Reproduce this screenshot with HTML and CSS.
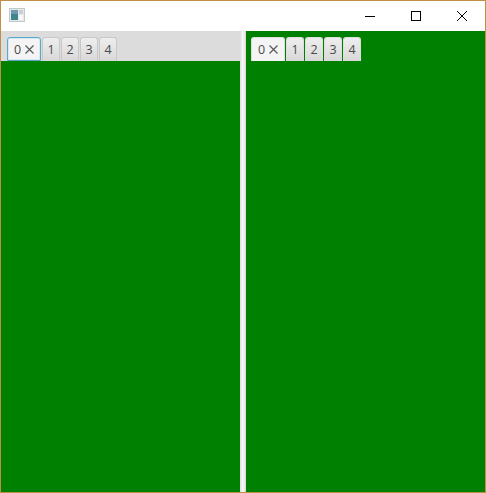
FILE: index.html
```html
<!DOCTYPE html>
<html lang="en">
<head>
    <meta charset="UTF-8">
    <title>Tabs</title>
    <link rel="stylesheet" href="styles.css">
</head>
<body>
    <div class="window">
        <div class="titlebar">
            <svg class="app-icon" width="16" height="14" viewBox="0 0 16 14">
                <rect x="0.5" y="0.5" width="15" height="13" fill="#e6e9ea" stroke="#c2c7ca"/>
                <rect x="2" y="2" width="7" height="10" fill="#3f8590"/>
                <rect x="2" y="2" width="7" height="4" fill="#6d98b0"/>
                <rect x="10" y="2" width="4" height="4" fill="#c6d0d6"/>
                <rect x="10" y="7" width="4" height="5" fill="#f8f8f8"/>
            </svg>
            <div class="win-buttons">
                <svg class="win-btn" width="46" height="30" viewBox="0 0 46 30">
                    <path d="M18 15.5h10" stroke="#000" fill="none"/>
                </svg>
                <svg class="win-btn" width="46" height="30" viewBox="0 0 46 30">
                    <rect x="18.5" y="10.5" width="9" height="9" stroke="#000" fill="none"/>
                </svg>
                <svg class="win-btn" width="46" height="30" viewBox="0 0 46 30">
                    <path d="M18 10l10 10M28 10l-10 10" stroke="#000" fill="none"/>
                </svg>
            </div>
        </div>
        <div class="split">
            <div class="pane">
                <div class="tab-header grey">
                    <div class="tab selected focused">
                        <span>0</span>
                        <svg class="close" width="9" height="9" viewBox="0 0 9 9"><path d="M0.5 0.5l8 8M8.5 0.5l-8 8"/></svg>
                    </div>
                    <div class="tab">1</div>
                    <div class="tab">2</div>
                    <div class="tab">3</div>
                    <div class="tab">4</div>
                </div>
            </div>
            <div class="divider"></div>
            <div class="pane">
                <div class="tab-header clear">
                    <div class="tab selected">
                        <span>0</span>
                        <svg class="close" width="9" height="9" viewBox="0 0 9 9"><path d="M0.5 0.5l8 8M8.5 0.5l-8 8"/></svg>
                    </div>
                    <div class="tab">1</div>
                    <div class="tab">2</div>
                    <div class="tab">3</div>
                    <div class="tab">4</div>
                </div>
            </div>
        </div>
    </div>
</body>
</html>
```

FILE: styles.css
```css
* {
    margin: 0;
    padding: 0;
    box-sizing: border-box;
}

html, body {
    height: 100%;
}

body {
    font-family: "Open Sans", "Noto Sans", sans-serif;
    overflow: hidden;
}

.window {
    height: 100%;
    display: flex;
    flex-direction: column;
    border: 1px solid #bf8f45;
    background: #fff;
}

.titlebar {
    height: 30px;
    flex: none;
    display: flex;
    align-items: center;
    justify-content: space-between;
    padding-left: 8px;
    background: #fff;
}

.app-icon {
    display: block;
    margin-bottom: 2px;
}

.win-btn,
.close {
    display: block;
}

.win-buttons {
    display: flex;
}

.split {
    flex: 1;
    display: flex;
    min-height: 0;
}

.pane {
    flex: 1;
    background: #008000;
}

.divider {
    width: 6px;
    flex: none;
    background: linear-gradient(to right, #dcdcdc, #f8f8f8 45%, #e6e6e6 85%, #cfcfcf);
}

.tab-header {
    height: 30px;
    display: flex;
    gap: 1px;
    align-items: flex-end;
    padding-left: 6px;
}

.tab-header.grey {
    background: #dcdcdc;
}

.tab-header.clear {
    padding-left: 5px;
}

.tab {
    width: 18px;
    height: 24px;
    display: flex;
    align-items: center;
    justify-content: center;
    gap: 4px;
    font-size: 12.5px;
    color: #4a4a4a;
    background: linear-gradient(to bottom, #eeeeee, #d8d8d8);
    border: 1px solid #c8c8c8;
    border-bottom: 0;
    border-radius: 3px 3px 0 0;
}

.tab-header.clear .tab {
    border-color: #dedede;
}

.tab.selected {
    width: 34px;
    background: #f4f4f4;
    border-color: #e6e6e6;
}

.tab.focused {
    border: 1px solid #5aa7c9;
    box-shadow: inset 0 0 0 1px #d6e8f0;
}

.close path {
    stroke: #5a5a5a;
    stroke-width: 1.2;
    fill: none;
}
```
